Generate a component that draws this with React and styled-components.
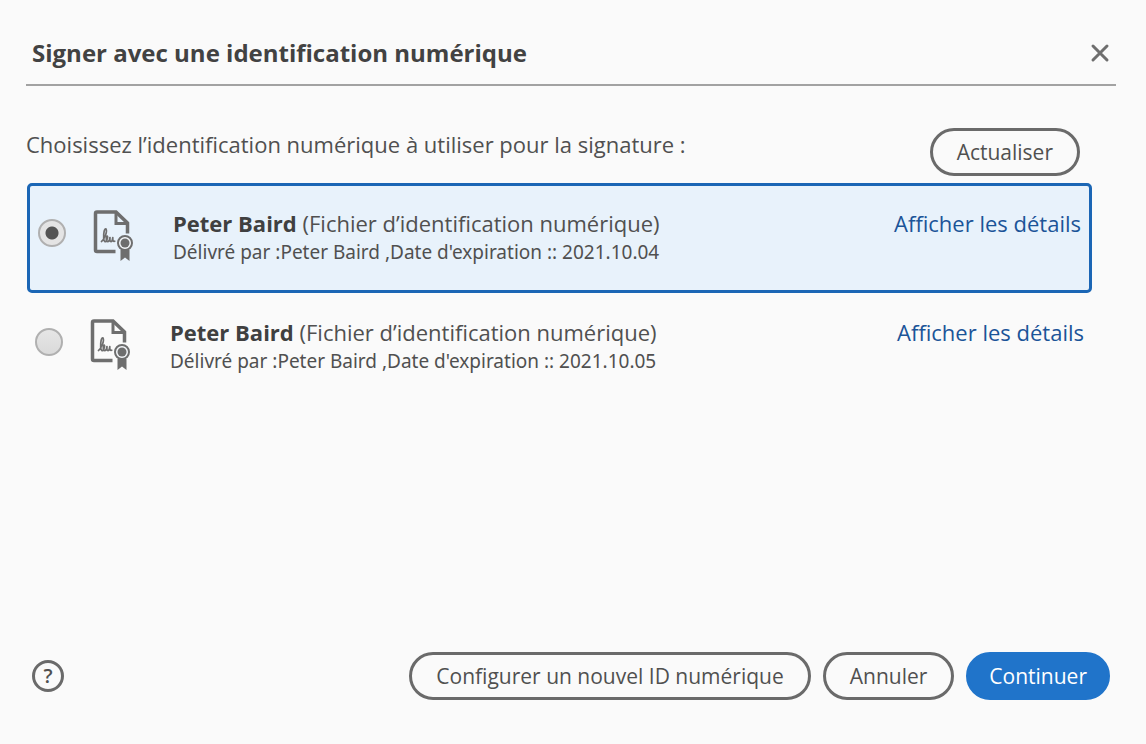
import React, { useState } from 'react'
import styled, { createGlobalStyle } from 'styled-components'

const signatures = [
    { id: 'id-1', name: 'Peter Baird', expires: '2021.10.04' },
    { id: 'id-2', name: 'Peter Baird', expires: '2021.10.05' },
]

// paper sheet with a scribble and a ribbon seal
function CertificateIcon() {
    return (
        <svg width="42" height="52" viewBox="0 0 42 52" fill="none" aria-hidden="true">
            <path
                d="M23.500 41.500H5A1.500 1.500 0 0 1 3.500 40V3.500A1.500 1.500 0 0 1 5 2h19L35.500 13v10.500"
                stroke="#6e6e6e"
                strokeWidth="3.500"
            />
            <path d="M24 2v11.500h11.500" stroke="#6e6e6e" strokeWidth="3" />
            <path
                d="M9.500 31.500c2.500-1.500 6-9.500 4.600-12.500-1.700-1-2.700 4-2.400 9.500.2 3.500 1.800 4 2.800 2 .8-1.500 1.600-4.300.6-4.300s-1.300 5.500.6 5.500c1.200 0 2-2.200 2.300-4-.3 2.500 0 4 1 4s1.500-2 1.800-4c-.2 2.500.3 4 1.900 3.500"
                stroke="#6e6e6e"
                strokeWidth="1.700"
                strokeLinecap="round"
                strokeLinejoin="round"
            />
            <path d="M28.500 40h9v11l-4.500-3.500-4.500 3.500z" fill="#6e6e6e" />
            <circle cx="33" cy="33" r="7" stroke="#6e6e6e" strokeWidth="2" fill="#f4f7fa" />
            <circle cx="33" cy="33" r="4.500" fill="#6e6e6e" />
        </svg>
    )
}

function SignatureRow({ signature, selected, onSelect }) {
    return (
        <Row $selected={selected}>
            <Radio
                type="radio"
                name="signature"
                id={signature.id}
                checked={selected}
                onChange={() => onSelect(signature.id)}
            />
            <IconBox>
                <CertificateIcon />
            </IconBox>
            <Details htmlFor={signature.id}>
                <Name>
                    <strong>{signature.name}</strong> (Fichier d’identification numérique)
                </Name>
                <Issuer>
                    Délivré par :{signature.name} ,Date d'expiration :: {signature.expires}
                </Issuer>
            </Details>
            <DetailsLink href="#details">Afficher les détails</DetailsLink>
        </Row>
    )
}

export default function App() {
    const [selectedId, setSelectedId] = useState('id-1')

    return (
        <Dialog>
            <GlobalStyle />
            <Header>
                <Title>Signer avec une identification numérique</Title>
                <CloseButton type="button" aria-label="Fermer">
                    <svg width="20" height="20" viewBox="0 0 20 20" aria-hidden="true">
                        <path d="M3 3l14 14M17 3L3 17" stroke="#6e6e6e" strokeWidth="3" strokeLinecap="round" />
                    </svg>
                </CloseButton>
            </Header>
            <Main>
                <Intro>
                    <Prompt>Choisissez l’identification numérique à utiliser pour la signature :</Prompt>
                    <Button type="button">Actualiser</Button>
                </Intro>
                <List>
                    {signatures.map((signature) => (
                        <SignatureRow
                            key={signature.id}
                            signature={signature}
                            selected={signature.id === selectedId}
                            onSelect={setSelectedId}
                        />
                    ))}
                </List>
            </Main>
            <Footer>
                <HelpButton type="button" aria-label="Aide">?</HelpButton>
                <Actions>
                    <Button type="button">Configurer un nouvel ID numérique</Button>
                    <Button type="button">Annuler</Button>
                    <Button type="button" $primary>Continuer</Button>
                </Actions>
            </Footer>
        </Dialog>
    )
}

const GlobalStyle = createGlobalStyle`
    * {
        box-sizing: border-box;
    }

    body {
        margin: 0;
        background: #fafafa;
        color: #505050;
        font-family: "Open Sans", "Noto Sans", sans-serif;
        font-size: 22px;
        line-height: 32px;
    }

    button {
        font: inherit;
        color: inherit;
        cursor: pointer;
    }
`

const Dialog = styled.div`
    display: flex;
    flex-direction: column;
    min-height: 100vh;
    padding: 24px 30px 44px 26px;
`

// HEADER STYLES
const Header = styled.header`
    display: flex;
    align-items: center;
    justify-content: space-between;
    height: 62px;
    padding: 0 6px 2px 6px;
    border-bottom: 2px solid #a2a2a2;
`

const Title = styled.h1`
    margin: 0;
    font-size: 24px;
    font-weight: 700;
    color: #424242;
`

const CloseButton = styled.button`
    display: flex;
    padding: 0;
    border: 0;
    background: none;
`

// MAIN STYLES
const Main = styled.main`
    flex: 1;
    padding-top: 42px;
`

const Intro = styled.div`
    display: flex;
    align-items: flex-start;
    justify-content: space-between;
    padding-right: 36px;
`

const Prompt = styled.p`
    margin: 0;
`

const Button = styled.button`
    height: 48px;
    padding: 0 ${(props) => (props.$primary ? '20px' : '24px')};
    border: 3px solid ${(props) => (props.$primary ? '#2074ca' : '#6a6a6a')};
    border-radius: 24px;
    background: ${(props) => (props.$primary ? '#2074ca' : 'transparent')};
    color: ${(props) => (props.$primary ? '#ffffff' : '#505050')};
    font-size: 21px;
    line-height: 28px;
    white-space: nowrap;
`

const List = styled.div`
    display: flex;
    flex-direction: column;
    gap: 2px;
    margin: 7px 24px 0 1px;
`

const Row = styled.div`
    display: flex;
    align-items: flex-start;
    padding: 24px 8px 22px;
    border: 0 solid #1b66b5;
    border-width: ${(props) => (props.$selected ? '3px' : '0')};
    border-radius: 5px;
    background: ${(props) => (props.$selected ? '#e8f2fb' : 'transparent')};
`

const Radio = styled.input`
    appearance: none;
    flex: none;
    width: 28px;
    height: 28px;
    margin: 9px 0 0;
    border: 2px solid #b0b0b0;
    border-radius: 50%;
    background: linear-gradient(#e6e6e6, #dadada);

    &:checked {
        background: radial-gradient(circle, #555555 6px, #e4e4e4 7px);
    }
`

const IconBox = styled.div`
    flex: none;
    display: flex;
    width: 68px;
    margin-left: 26px;
`

const Details = styled.label`
    flex: 1;
    margin-left: 13px;
`

const Name = styled.span`
    display: block;
    line-height: 26px;

    strong {
        color: #404040;
    }
`

const Issuer = styled.span`
    display: block;
    font-family: "Noto Sans", "Open Sans", sans-serif;
    font-size: 19px;
    line-height: 32px;
`

const DetailsLink = styled.a`
    color: #1b5498;
    line-height: 26px;
    text-decoration: none;
    white-space: nowrap;
`

// FOOTER STYLES
const Footer = styled.footer`
    display: flex;
    align-items: center;
    justify-content: space-between;
    padding: 0 6px;
`

const HelpButton = styled.button`
    width: 32px;
    height: 32px;
    padding: 0;
    border: 3px solid #6a6a6a;
    border-radius: 50%;
    background: none;
    font-size: 20px;
    font-weight: 600;
    line-height: 26px;
`

const Actions = styled.div`
    display: flex;
    gap: 12px;
`
